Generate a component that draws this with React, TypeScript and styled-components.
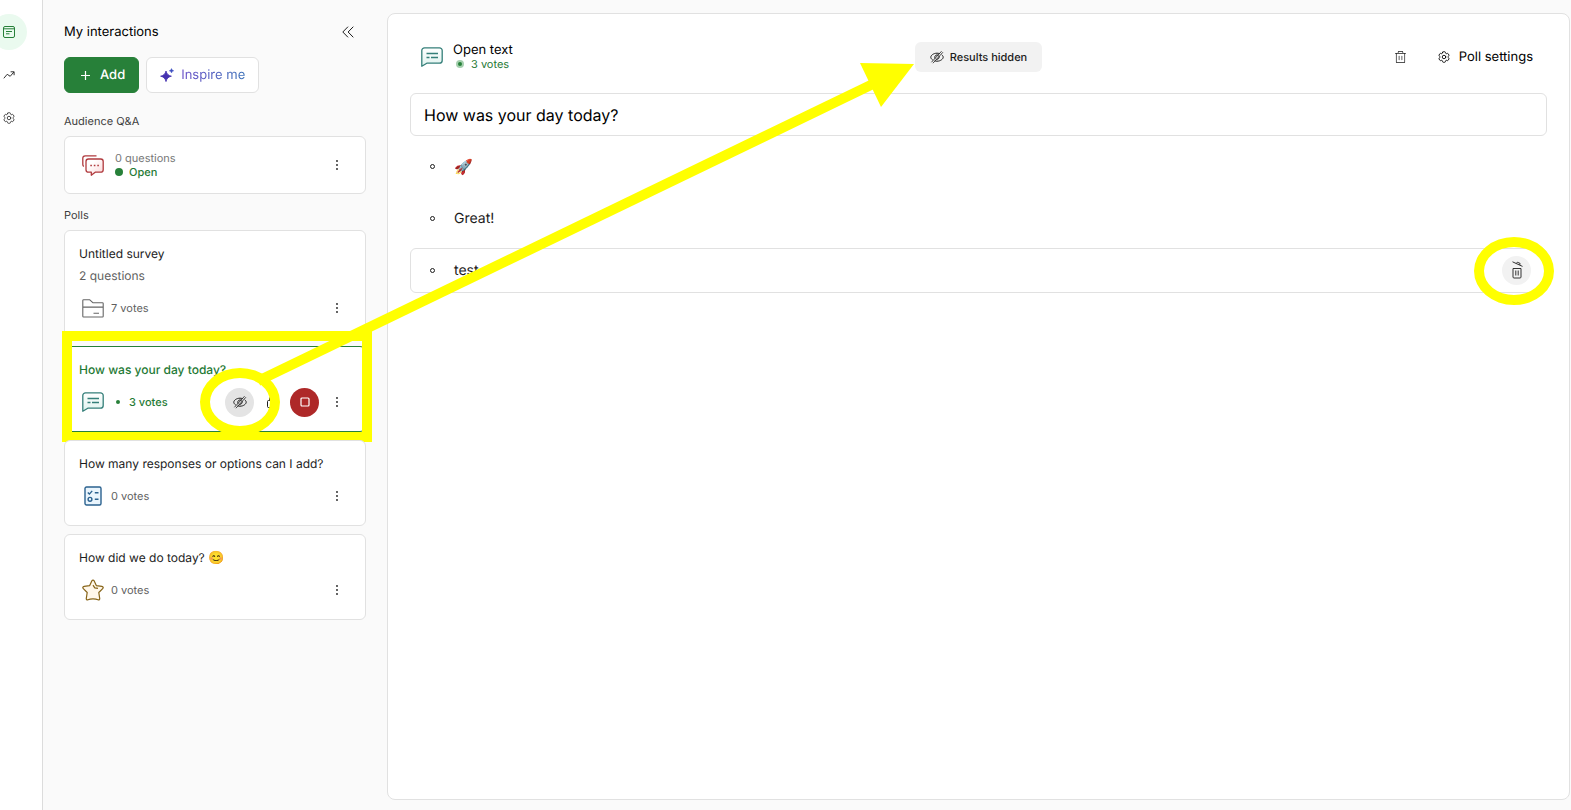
import React from "react";
import styled, { createGlobalStyle, css } from "styled-components";
import { PiTrashLight } from "react-icons/pi";
import { HiOutlineCog6Tooth } from "react-icons/hi2";

const colors = {
  green: "#278039",
  greenText: "#1f7a35",
  red: "#ae2828",
  border: "#e1e1e1",
  canvas: "#fafafa",
  ink: "#1c1c1c",
  body: "#3d3d3d",
  muted: "#5f5f5f",
  marker: "#ffff00",
};

const GlobalStyle = createGlobalStyle`
  *, *::before, *::after { box-sizing: border-box; }
  body {
    margin: 0;
    background: ${colors.canvas};
    color: ${colors.ink};
    font-family: Inter, "Liberation Sans", sans-serif;
    font-size: 13px;
    line-height: 16px;
    text-rendering: geometricPrecision;
  }
  h1, h2, h3, p, ul { margin: 0; padding: 0; font: inherit; }
  button, input { font: inherit; color: inherit; text-rendering: inherit; }
  svg { display: block; flex: none; }
`;

const Page = styled.div`
  position: relative;
  display: grid;
  grid-template-columns: 43px 344px minmax(0, 1fr);
  min-height: 100vh;
  overflow: hidden;
`;

const Rail = styled.nav`
  display: flex;
  flex-direction: column;
  align-items: flex-start;
  gap: 7px;
  padding-top: 14px;
  background: #fff;
  border-right: 1px solid #dcdcdc;
`;

const RailLink = styled.a<{ $active?: boolean }>`
  display: flex;
  align-items: center;
  justify-content: center;
  width: 36px;
  height: 36px;
  margin-left: -9px;
  border-radius: 50%;
  color: ${(p) => (p.$active ? colors.green : "#333")};
  background: ${(p) => (p.$active ? "#eafaef" : "transparent")};
`;

const Sidebar = styled.aside`
  padding: 22px 21px 24px;
`;

const SidebarHeader = styled.header`
  display: flex;
  align-items: center;
  justify-content: space-between;
  height: 20px;
  padding-right: 8px;
`;

const Title = styled.h1`
  line-height: 14px;
  color: #000;
`;

const IconButton = styled.button<{ $size?: number; $fill?: string; $tone?: string }>`
  display: flex;
  align-items: center;
  justify-content: center;
  width: ${(p) => p.$size ?? 20}px;
  height: ${(p) => p.$size ?? 20}px;
  padding: 0;
  border: 0;
  border-radius: 50%;
  color: ${(p) => p.$tone ?? colors.ink};
  background: ${(p) => p.$fill ?? "transparent"};
`;

const Actions = styled.div`
  display: flex;
  gap: 7px;
  margin-top: 15px;
`;

const ActionButton = styled.button<{ $primary?: boolean }>`
  display: flex;
  align-items: center;
  gap: 7px;
  height: 36px;
  padding: 0 13px;
  border-radius: 6px;
  ${(p) =>
    p.$primary
      ? css`
          gap: 8px;
          font-weight: 500;
          color: #fff;
          background: ${colors.green};
          border: 1px solid ${colors.green};
        `
      : css`
          background: #fff;
          border: 1px solid ${colors.border};
        `}
`;

const InspireLabel = styled.span`
  color: transparent;
  background: linear-gradient(90deg, #6a4fc8, #3a6fb8);
  background-clip: text;
`;

const SectionTitle = styled.h2`
  margin: 0 0 7px;
  font-size: 11px;
  font-weight: 400;
  color: ${colors.body};
`;

const Section = styled.section<{ $gap: number }>`
  margin-top: ${(p) => p.$gap}px;
`;

const CardList = styled.ul`
  display: flex;
  flex-direction: column;
  gap: 8px;
  list-style: none;
`;

const Card = styled.li<{ $selected?: boolean }>`
  position: relative;
  padding: 15px 14px;
  background: #fff;
  border: 1px solid ${(p) => (p.$selected ? colors.green : colors.border)};
  border-radius: 6px;
  color: ${(p) => (p.$selected ? colors.greenText : colors.ink)};
`;

const QnaCard = styled(Card).attrs({ as: "div" })`
  display: flex;
  align-items: center;
  gap: 8px;
  height: 58px;
  padding: 0 14px;
`;

const CardTitle = styled.h3<{ $strong?: boolean }>`
  display: flex;
  gap: 4px;
  font-size: 12px;
  font-weight: ${(p) => (p.$strong ? 500 : 400)};
`;

const CardSubtitle = styled.p`
  margin-top: 6px;
  font-size: 12px;
  color: ${colors.muted};
`;

const CardFooter = styled.div`
  display: flex;
  align-items: center;
  gap: 4px;
  height: 28px;
  margin-top: 10px;
`;

const IconSlot = styled.span`
  display: flex;
  align-items: center;
  justify-content: center;
  width: 28px;
`;

const Small = styled.span<{ $tone?: string; $weight?: number }>`
  display: flex;
  align-items: center;
  gap: 6px;
  font-size: 11px;
  line-height: 14px;
  font-weight: ${(p) => p.$weight ?? 400};
  color: ${(p) => p.$tone ?? colors.muted};
`;

const Dot = styled.i<{ $kind: "solid" | "tiny" | "halo" }>`
  width: 8px;
  height: 8px;
  border-radius: 50%;
  background: ${colors.green};
  ${(p) =>
    p.$kind === "tiny" &&
    css`
      width: 4px;
      height: 4px;
      margin: 0 3px 0 5px;
    `}
  ${(p) =>
    p.$kind === "halo" &&
    css`
      border: 2px solid #a5cfae;
      margin: 0 1px 0 3px;
    `}
`;

const FooterControls = styled.div`
  display: flex;
  align-items: center;
  gap: 4px;
  margin-left: auto;
`;

const Panel = styled.main`
  margin: 13px 1px 10px 0;
  padding: 28px 22px;
  background: #fff;
  border: 1px solid ${colors.border};
  border-radius: 8px;
`;

const PanelHeader = styled.header`
  display: grid;
  grid-template-columns: 1fr auto 1fr;
  align-items: center;
  height: 30px;
  padding: 0 11px;
`;

const PollType = styled.div`
  display: flex;
  align-items: center;
  gap: 10px;
`;

const HiddenButton = styled.button`
  display: flex;
  align-items: center;
  gap: 6px;
  height: 30px;
  padding: 0 15px;
  border: 0;
  border-radius: 6px;
  background: #f2f2f2;
  font-size: 11px;
  font-weight: 500;
`;

const PanelTools = styled.div`
  display: flex;
  align-items: center;
  justify-content: flex-end;
  gap: 26px;
  padding-right: 3px;
`;

const TextButton = styled.button`
  display: flex;
  align-items: center;
  gap: 8px;
  padding: 0;
  border: 0;
  background: none;
  color: #000;
`;

const QuestionInput = styled.input`
  display: block;
  width: 100%;
  height: 43px;
  margin-top: 21px;
  padding: 0 13px;
  border: 1px solid ${colors.border};
  border-radius: 6px;
  background: #fff;
  font-size: 16px;
  color: #000;
`;

const Answers = styled(CardList)`
  gap: 7px;
  margin-top: 8px;
`;

const Answer = styled.li<{ $hovered?: boolean }>`
  display: flex;
  align-items: center;
  gap: 19px;
  height: 45px;
  padding: 0 15px 0 19px;
  border: 1px solid ${(p) => (p.$hovered ? colors.border : "transparent")};
  border-radius: 6px;
  font-size: 14px;
`;

const Emoji = styled.span<{ $size: number }>`
  font-size: ${(p) => p.$size}px;
`;

const Bullet = styled.i`
  width: 5px;
  height: 5px;
  border: 1px solid ${colors.ink};
  border-radius: 50%;
`;

const AnswerDelete = styled.div`
  position: relative;
  margin-left: auto;
`;

const MarkerBox = styled.span`
  position: absolute;
  inset: -16px -7px -11px -3px;
  border: 10px solid ${colors.marker};
  pointer-events: none;
`;

const MarkerRing = styled.span<{ $shift?: number }>`
  position: absolute;
  top: 50%;
  left: 50%;
  width: 80px;
  height: 68px;
  margin: -34px 0 0 ${(p) => -40 - (p.$shift ?? 0)}px;
  border: 10px solid ${colors.marker};
  border-radius: 50%;
  pointer-events: none;
`;

const Ringed = styled.div`
  position: relative;
  z-index: 1;
`;

const MarkerArrow = styled.svg`
  position: absolute;
  top: 0;
  left: 0;
  pointer-events: none;
`;

const BoardIcon = () => (
  <svg width="12" height="12" viewBox="0 0 12 12" fill="none" stroke="currentColor">
    <rect x="0.5" y="0.5" width="11" height="11" rx="1.5" />
    <path d="M0.5 2.8h11M3 5.5h6M3 7.8h3.5" />
  </svg>
);

const TrendIcon = () => (
  <svg width="12" height="12" viewBox="0 0 12 12" fill="none" stroke="currentColor">
    <path d="M0.8 9.3l3.4-4 3 2 3.8-4.4M7.6 2.8h3.5v3.4" />
  </svg>
);

const CollapseIcon = () => (
  <svg width="12" height="12" viewBox="0 0 12 12" fill="none" stroke="currentColor">
    <path d="M6 0.7L0.8 6 6 11.3M11.3 0.7L6.1 6l5.2 5.3" />
  </svg>
);

const PlusIcon = () => (
  <svg width="14" height="14" viewBox="0 0 14 14" fill="none" stroke="currentColor" strokeWidth="1.2">
    <path d="M7.500 3v9M3 7.500h9" />
  </svg>
);

const SparkleIcon = () => (
  <svg width="14" height="14" viewBox="0 0 14 14">
    <path d="M6 3c.8 3 2.2 4.400 5.400 5.200C8.200 9 6.800 10.400 6 13.600 5.200 10.400 3.800 9 .6 8.200 3.800 7.400 5.200 6 6 3z" fill="#4532b0" stroke="#4532b0" strokeWidth="0.8" strokeLinejoin="round" />
    <path d="M11.500.6c.4 1.300.9 1.800 2.200 2.200-1.300.4-1.800.9-2.200 2.200-.4-1.300-.9-1.800-2.200-2.200 1.300-.4 1.800-.9 2.200-2.200z" fill="#3d4fc0" stroke="#3d4fc0" strokeWidth="0.5" />
  </svg>
);

const MoreIcon = () => (
  <svg width="10" height="12" viewBox="0 0 10 12" fill="currentColor">
    <circle cx="5" cy="2" r="0.9" />
    <circle cx="5" cy="6" r="0.9" />
    <circle cx="5" cy="10" r="0.9" />
  </svg>
);

const EyeOffIcon = () => (
  <svg width="14" height="14" viewBox="0 0 14 14" fill="none" stroke="currentColor" strokeLinecap="round">
    <path d="M2.400 9.800C1.300 9 .8 8 .8 7.200.8 5.400 3.400 3.200 7 3.200c.8 0 1.500.1 2.200.3M12 5c.8.700 1.200 1.500 1.200 2.200 0 1.700-2.600 4-6.200 4-.7 0-1.300-.1-1.900-.3" />
    <path d="M4.900 8.300c-.7-1.500.3-3.300 2.100-3.400.5 0 .9.100 1.200.300M9.200 6.500c.4 1.500-.7 2.900-2.400 2.900" />
    <path d="M11.300 1.500L1.700 12M12.700 2.500L3.200 12.900" strokeWidth="0.800" />
  </svg>
);

const LockIcon = () => (
  <svg width="12" height="14" viewBox="0 0 12 14" fill="none" stroke="currentColor">
    <rect x="1.500" y="5.500" width="9" height="7" rx="1" />
    <path d="M3.500 5.500V4a2.500 2.500 0 0 1 5 0v1.500" />
  </svg>
);

const StopIcon = () => (
  <svg width="10" height="10" viewBox="0 0 10 10" fill="none" stroke="currentColor" strokeWidth="1.200">
    <rect x="1" y="1" width="8" height="8" rx="1" />
  </svg>
);

const OpenTrashIcon = () => (
  <svg width="14" height="20" viewBox="0 0 14 20" fill="none" stroke="#333">
    <path d="M3 7.500h8v8.500a1 1 0 0 1-1 1H4a1 1 0 0 1-1-1z" />
    <path d="M5.800 9.500v5M8.200 9.500v5" />
    <path d="M2.500.8l10 4.600M6.300 2.400l1-1.200 2.800 1.200-.4 1.600" />
  </svg>
);

const OpenTextIcon = () => (
  <svg width="22" height="20" viewBox="0 0 22 20" fill="none" stroke="#347f79" strokeWidth="1.300" strokeLinejoin="round">
    <defs>
      <linearGradient id="openTextTint" x1="0" y1="0" x2="0" y2="1">
        <stop offset="0" stopColor="#fff" />
        <stop offset="1" stopColor="#dff3ef" />
      </linearGradient>
    </defs>
    <path d="M3.500.8h15A2.700 2.700 0 0 1 21.200 3.500v10a2.700 2.700 0 0 1-2.700 2.700H5.800L.8 19.200V3.500A2.700 2.700 0 0 1 3.500.8z" fill="url(#openTextTint)" />
    <path d="M5.500 6.500H17M5.500 10.500h3M10 10.500h7" />
  </svg>
);

const QnaIcon = () => (
  <svg width="22" height="21" viewBox="0 0 22 21" fill="none" stroke="#b03a3e" strokeWidth="1.300" strokeLinejoin="round">
    <defs>
      <linearGradient id="qnaTint" x1="0" y1="0" x2="1" y2="1">
        <stop offset="0.300" stopColor="#fff" />
        <stop offset="1" stopColor="#fbd5d6" />
      </linearGradient>
    </defs>
    <path d="M1.800 11.500C1 11 .8 10.300.8 9.500V3.300A2.500 2.500 0 0 1 3.300.8h11.200" />
    <path d="M6.500 4h12.200a2.500 2.500 0 0 1 2.500 2.500v8.200a2.500 2.500 0 0 1-2.500 2.500h-5.500L9.300 20.200v-3H6.500A2.500 2.500 0 0 1 4 14.700V6.500A2.500 2.500 0 0 1 6.500 4z" fill="url(#qnaTint)" />
    <path d="M8.300 10.500h1.600M11.800 10.500h1.600M15.300 10.500h1.600" strokeWidth="1.600" />
  </svg>
);

const FolderIcon = () => (
  <svg width="22" height="19" viewBox="0 0 22 19" fill="none" stroke="#666" strokeWidth="1.100" strokeLinejoin="round">
    <path d="M.8 1.600c0-.5.300-.8.800-.8h6.200l3 2.900h9.600c.5 0 .8.300.8.800v12.700c0 .5-.3.800-.8.800H1.600c-.5 0-.8-.3-.8-.8zM.8 8.100h20.400M11.500 14.300h5.500" />
  </svg>
);

const ChecklistIcon = () => (
  <svg width="18" height="20" viewBox="0 0 18 20" fill="none" stroke="#2b628f" strokeWidth="1.400">
    <rect x="1" y="1" width="16" height="18" rx="1.500" fill="#eaf5fd" />
    <path d="M3.800 6.500l1.600 1.600 2.800-3.200M10.800 6.700h3.700M10.800 13.300h3.700" />
    <circle cx="6" cy="13.300" r="1.900" />
  </svg>
);

const StarIcon = () => (
  <svg width="22" height="22" viewBox="0 0 22 22" fill="none" stroke="#876418" strokeWidth="1.200" strokeLinejoin="round">
    <path d="M9.900 1.800c.5-1 1.700-1 2.200 0l2.200 4.800 5.600.8c1.300.2 1.700 1.300.8 2.200l-3.900 3.900.9 5.900c.2 1.200-.7 1.800-1.700 1.300C13.500 19.500 8.500 19.500 6 20.700c-1 .5-1.900-.1-1.700-1.300l.9-5.900L1.300 9.600c-.9-.9-.5-2 .8-2.200l5.600-.8z" fill="#fff7ea" />
    <path d="M11 6.200l1.800 2.600 3.200.6" />
  </svg>
);

interface Poll {
  title: string;
  emoji?: string;
  subtitle?: string;
  votes: number;
  icon: React.ReactNode;
  selected?: boolean;
}

const polls: Poll[] = [
  { title: "Untitled survey", subtitle: "2 questions", votes: 7, icon: <FolderIcon /> },
  { title: "How was your day today?", votes: 3, icon: <OpenTextIcon />, selected: true },
  { title: "How many responses or options can I add?", votes: 0, icon: <ChecklistIcon /> },
  { title: "How did we do today?", emoji: "😊", votes: 0, icon: <StarIcon /> },
];

const LiveControls = () => (
  <>
    <Ringed>
      <IconButton aria-label="Hide results" $size={29} $fill="#e4e4e4">
        <EyeOffIcon />
      </IconButton>
      <MarkerRing />
    </Ringed>
    <IconButton aria-label="Lock poll" $size={28}>
      <LockIcon />
    </IconButton>
    <IconButton aria-label="Stop poll" $size={29} $fill={colors.red} $tone="#fff">
      <StopIcon />
    </IconButton>
  </>
);

const PollCard = ({ title, emoji, subtitle, votes, icon, selected }: Poll) => (
  <Card $selected={selected}>
    <CardTitle $strong={selected}>
      {title}
      {emoji && <Emoji $size={13}>{emoji}</Emoji>}
    </CardTitle>
    {subtitle && <CardSubtitle>{subtitle}</CardSubtitle>}
    {selected && <MarkerBox />}
    <CardFooter>
      <IconSlot>{icon}</IconSlot>
      {selected ? (
        <Small $tone={colors.greenText} $weight={500}>
          <Dot $kind="tiny" />
          {votes} votes
        </Small>
      ) : (
        <Small>{votes} votes</Small>
      )}
      <FooterControls>
        {selected && <LiveControls />}
        <IconButton aria-label="More options" $size={28}>
          <MoreIcon />
        </IconButton>
      </FooterControls>
    </CardFooter>
  </Card>
);

const App = () => (
  <>
    <GlobalStyle />
    <Page>
      <Rail aria-label="Sections">
        <RailLink href="#interactions" aria-label="Interactions" $active>
          <BoardIcon />
        </RailLink>
        <RailLink href="#analytics" aria-label="Analytics">
          <TrendIcon />
        </RailLink>
        <RailLink href="#settings" aria-label="Settings">
          <HiOutlineCog6Tooth size={14} />
        </RailLink>
      </Rail>

      <Sidebar>
        <SidebarHeader>
          <Title>My interactions</Title>
          <IconButton aria-label="Collapse sidebar">
            <CollapseIcon />
          </IconButton>
        </SidebarHeader>
        <Actions>
          <ActionButton $primary>
            <PlusIcon />
            Add
          </ActionButton>
          <ActionButton>
            <SparkleIcon />
            <InspireLabel>Inspire me</InspireLabel>
          </ActionButton>
        </Actions>

        <Section $gap={20}>
          <SectionTitle>Audience Q&amp;A</SectionTitle>
          <QnaCard>
            <IconSlot>
              <QnaIcon />
            </IconSlot>
            <div>
              <Small $tone="#777">0 questions</Small>
              <Small $tone={colors.greenText} $weight={500}>
                <Dot $kind="solid" />
                Open
              </Small>
            </div>
            <FooterControls>
              <IconButton aria-label="More options" $size={28}>
                <MoreIcon />
              </IconButton>
            </FooterControls>
          </QnaCard>
        </Section>

        <Section $gap={13}>
          <SectionTitle>Polls</SectionTitle>
          <CardList>
            {polls.map((poll) => (
              <PollCard key={poll.title} {...poll} />
            ))}
          </CardList>
        </Section>
      </Sidebar>

      <Panel>
        <PanelHeader>
          <PollType>
            <OpenTextIcon />
            <div>
              <Title as="h2">Open text</Title>
              <Small $tone={colors.greenText}>
                <Dot $kind="halo" />3 votes
              </Small>
            </div>
          </PollType>
          <HiddenButton>
            <EyeOffIcon />
            Results hidden
          </HiddenButton>
          <PanelTools>
            <IconButton aria-label="Delete poll">
              <PiTrashLight size={15} />
            </IconButton>
            <TextButton>
              <HiOutlineCog6Tooth size={14} />
              Poll settings
            </TextButton>
          </PanelTools>
        </PanelHeader>
        <QuestionInput aria-label="Question" defaultValue="How was your day today?" />
        <Answers>
          <Answer>
            <Bullet />
            <Emoji $size={15}>🚀</Emoji>
          </Answer>
          <Answer>
            <Bullet />
            <span>Great!</span>
          </Answer>
          <Answer $hovered>
            <Bullet />
            <span>test</span>
            <AnswerDelete>
              <IconButton aria-label="Delete response" $size={29} $fill="#f2f2f2">
                <OpenTrashIcon />
              </IconButton>
              <MarkerRing $shift={3} />
            </AnswerDelete>
          </Answer>
        </Answers>
      </Panel>

      <MarkerArrow width="920" height="400" viewBox="0 0 920 400" aria-hidden="true">
        <path d="M258 381L875 83" stroke={colors.marker} strokeWidth="10" />
        <path d="M914 64L860 63l21 44z" fill={colors.marker} />
      </MarkerArrow>
    </Page>
  </>
);

export default App;
